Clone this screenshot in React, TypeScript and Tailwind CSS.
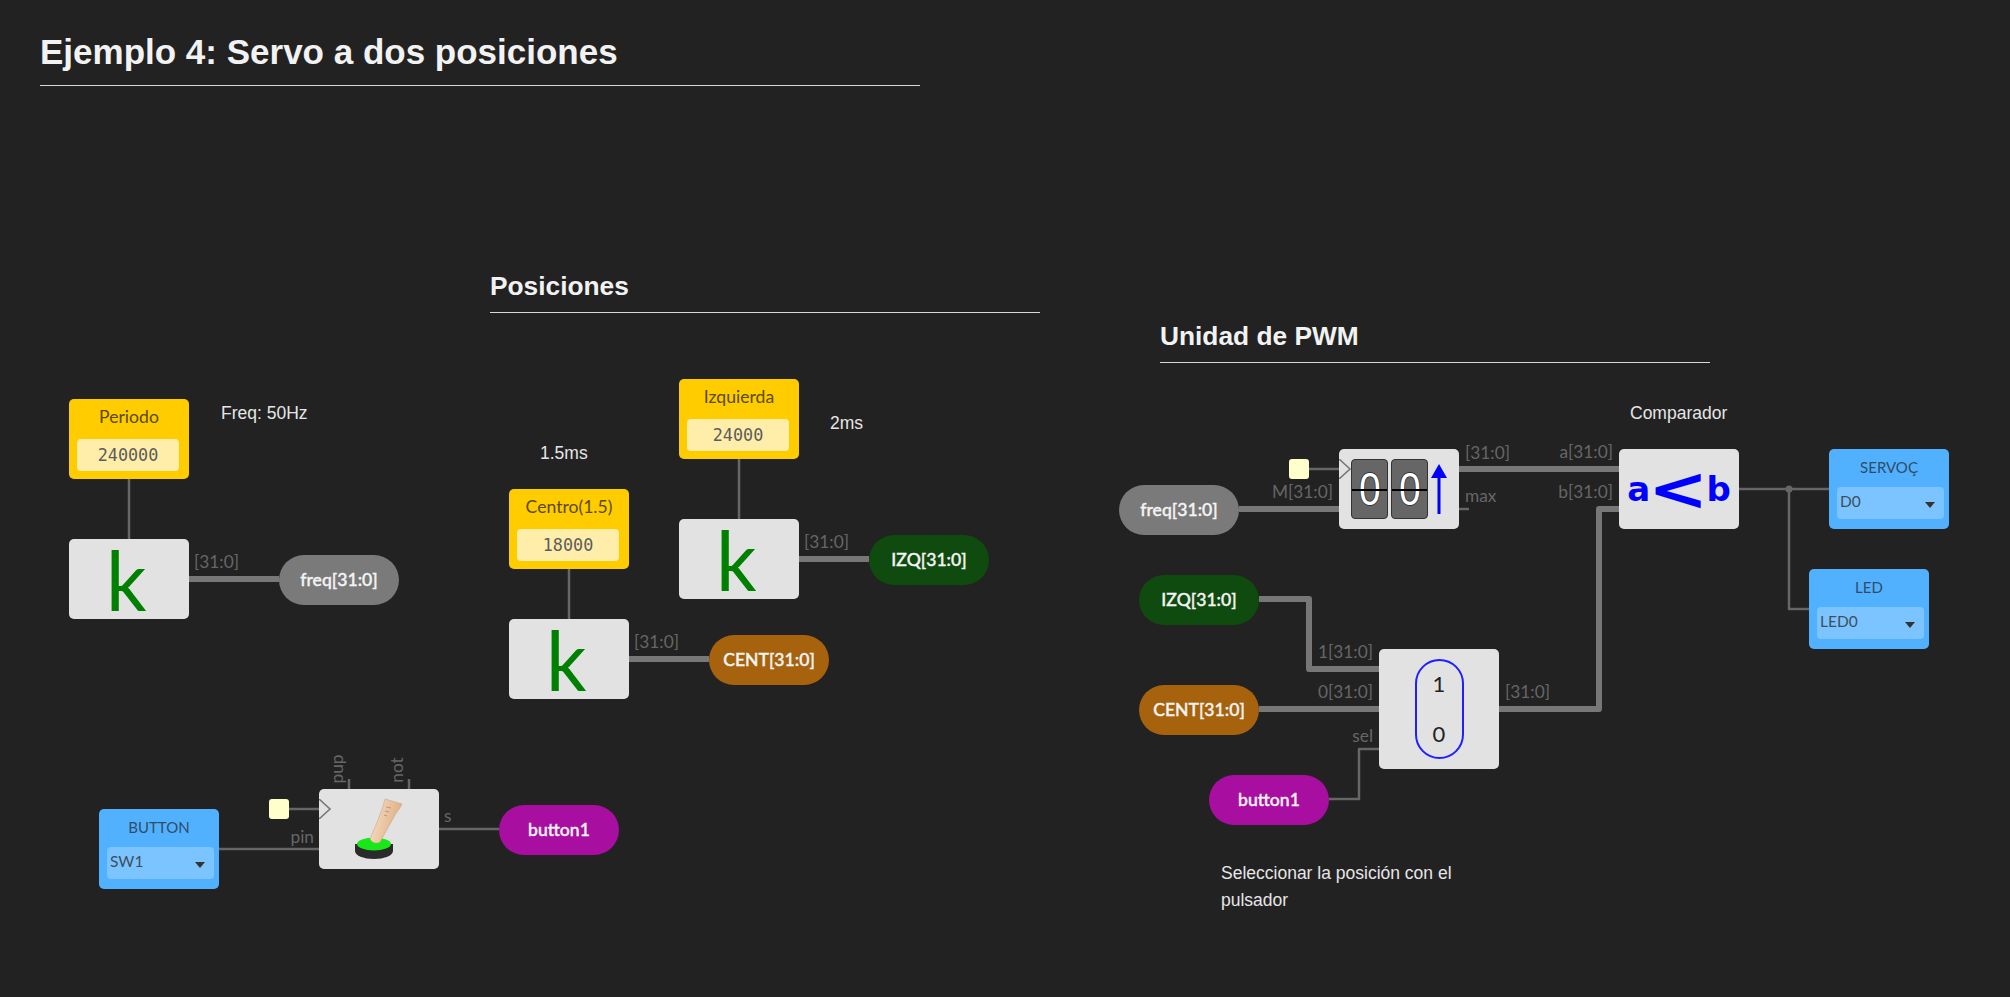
const lato = "font-['Lato','Noto_Sans',sans-serif]";

type WireProps = { d: string; thick?: boolean };

const wires: WireProps[] = [
  { d: "M129 479V539" },
  { d: "M189 579H279", thick: true },
  { d: "M739 459V519" },
  { d: "M799 559H869", thick: true },
  { d: "M569 569V619" },
  { d: "M629 659H709", thick: true },
  { d: "M219 849H319" },
  { d: "M289 809H319" },
  { d: "M439 829H499" },
  { d: "M349 779V789" },
  { d: "M409 779V789" },
  { d: "M1309 469H1339" },
  { d: "M1239 509H1339", thick: true },
  { d: "M1459 469H1619", thick: true },
  { d: "M1459 509H1469" },
  { d: "M1259 599H1309V669H1379", thick: true },
  { d: "M1259 709H1379", thick: true },
  { d: "M1329 799H1359V749H1379" },
  { d: "M1499 709H1599V509H1619", thick: true },
  { d: "M1739 489H1829" },
  { d: "M1789 489V609H1809" },
];

const Heading = ({ text, className }: { text: string; className: string }) => (
  <div className={`absolute w-[550px] h-[53px] border-b-[1.5px] border-[#d8d8d8] text-[26.3px] leading-[52px] font-bold text-[#f2f2f2] ${className}`}>
    {text}
  </div>
);

const Note = ({ text, className }: { text: string; className: string }) => (
  <p className={`absolute text-[17.5px] leading-[27px] text-[#e6e6e6] ${className}`}>{text}</p>
);

const Label = ({ text, className }: { text: string; className: string }) => (
  <span className={`absolute ${lato} text-[17.3px] leading-5 text-[#666666] whitespace-nowrap ${className}`}>{text}</span>
);

const Pill = ({ text, className }: { text: string; className: string }) => (
  <div className={`absolute w-[120px] h-[50px] rounded-[25px] flex items-center justify-center ${lato} text-[17.6px] font-medium [-webkit-text-stroke:0.4px_#f4f4f4] text-[#f4f4f4] ${className}`}>
    {text}
  </div>
);

const Constant = ({ name, value, className }: { name: string; value: string; className: string }) => (
  <div className={`absolute w-[120px] h-[80px] rounded-[5px] bg-[#ffcc00] ${className}`}>
    <div className={`h-[40px] pt-[7px] text-center ${lato} text-[17.6px] leading-[22px] text-[#5a4a00]`}>{name}</div>
    <div className="ml-2 mr-[10px] h-[32px] rounded-[4px] bg-[#ffeeaa] text-center font-['DejaVu_Sans_Mono',monospace] text-[16.8px] leading-[33px] text-[#5c5c5c]">
      {value}
    </div>
  </div>
);

const PinSelect = ({ name, value, className }: { name: string; value: string; className: string }) => (
  <div className={`absolute w-[120px] h-[80px] rounded-[5px] bg-[#51b1ff] ${className}`}>
    <div className={`h-[38px] pt-[7px] text-center ${lato} text-[15px] leading-[22px] text-[#2f4d68]`}>{name}</div>
    <div className="relative ml-2 mr-[5px] h-[32px] rounded-[4px] bg-[#7cc4ff]">
      <span className={`absolute left-[3px] top-[4px] ${lato} text-[15.5px] leading-5 text-[#3d4f5e]`}>{value}</span>
      <span className="absolute left-[88px] top-[15px] w-0 h-0 border-x-[5px] border-x-transparent border-t-[6px] border-t-[#333333]" />
    </div>
  </div>
);

const Module = ({ className, children }: { className: string; children?: React.ReactNode }) => (
  <div className={`absolute w-[120px] h-[80px] rounded-[5px] bg-[#e2e2e2] ${className}`}>
    {children}
  </div>
);

const KBlock = ({ className }: { className: string }) => (
  <Module className={className}>
    <div className="flex h-[80px] items-center justify-center pr-[5px]">
      <span className="font-['Lato',sans-serif] text-[84px] leading-[80px] scale-x-95 text-[#008000]">k</span>
    </div>
  </Module>
);

const ClockPin = ({ className }: { className: string }) => (
  <div className={`absolute w-5 h-5 rounded-[3px] bg-[#ffffcc] ${className}`} />
);

const ClockMark = () => (
  <svg className="absolute left-0 top-[10px]" width="14" height="20" viewBox="0 0 14 20">
    <path d="M0 0L11 10L0 20" fill="none" stroke="#777777" strokeWidth="1.6" />
  </svg>
);

const FlipDigit = () => (
  <div className="relative w-[37px] h-[60px] rounded-[4px] bg-[#666666] border border-[#333333] flex items-center justify-center">
    <span className="font-['Liberation_Sans',sans-serif] text-[46px] leading-none scale-x-[0.85] text-white [-webkit-text-stroke:1.5px_#222222] [paint-order:stroke_fill]">0</span>
    <span className="absolute inset-x-0 top-[29px] h-[2px] bg-black" />
  </div>
);

const PressIcon = () => (
  <svg className="absolute left-[30px] top-[4px]" width="60" height="72" viewBox="0 0 60 72">
    <defs>
      <linearGradient id="finger" x1="0" y1="0" x2="1" y2="0.3">
        <stop offset="0" stopColor="#f9e4cc" />
        <stop offset="1" stopColor="#dfae82" />
      </linearGradient>
    </defs>
    <ellipse cx="25" cy="58" rx="19" ry="8" fill="#2b2b2b" />
    <rect x="6" y="51" width="38" height="7" fill="#2b2b2b" />
    <ellipse cx="25" cy="51" rx="17" ry="6.5" fill="#18e818" />
    <path d="M36 6L53 11C51 16 47 19 45 24L31 49C28 51 23 50 21 46C25 36 32 22 36 6Z" fill="url(#finger)" stroke="#c9a68a" strokeWidth="0.6" />
    <path d="M37 14L42 15M36 18L40 19M35 22L38 23" stroke="#b08a70" strokeWidth="0.8" />
  </svg>
);

const App = () => {
  return (
    <div className="relative w-full h-screen overflow-hidden bg-[#222222] font-['Liberation_Sans',Arial,sans-serif]">
      <div className="ml-10 w-[880px] h-[86px] pt-[31px] border-b-[1.5px] border-[#d8d8d8]">
        <h1 className="text-[35px] leading-[42px] font-bold text-[#f2f2f2]">Ejemplo 4: Servo a dos posiciones</h1>
      </div>

      <svg className="absolute inset-0" width="2010" height="997" fill="none">
        {wires.map((wire) => (
          <path
            key={wire.d}
            d={wire.d}
            stroke={wire.thick ? "#777777" : "#666666"}
            strokeWidth={wire.thick ? 6 : 2.5}
            strokeLinejoin="round"
          />
        ))}
        <circle cx="1789" cy="489" r="3.5" fill="#666666" />
      </svg>

      <Heading text="Posiciones" className="left-[490px] top-[260px]" />
      <Heading text="Unidad de PWM" className="left-[1160px] top-[310px]" />

      <Note text="Freq: 50Hz" className="left-[221px] top-[400px]" />
      <Note text="1.5ms" className="left-[540px] top-[440px]" />
      <Note text="2ms" className="left-[830px] top-[410px]" />
      <Note text="Comparador" className="left-[1630px] top-[400px]" />
      <Note text="Seleccionar la posición con el pulsador" className="left-[1221px] top-[860px] w-[260px]" />

      <Constant name="Periodo" value="240000" className="left-[69px] top-[399px]" />
      <KBlock className="left-[69px] top-[539px]" />
      <Label text="[31:0]" className="left-[194px] top-[552px]" />
      <Pill text="freq[31:0]" className="left-[279px] top-[555px] bg-[#7a7a7a]" />

      <Constant name="Izquierda" value="24000" className="left-[679px] top-[379px]" />
      <KBlock className="left-[679px] top-[519px]" />
      <Label text="[31:0]" className="left-[804px] top-[532px]" />
      <Pill text="IZQ[31:0]" className="left-[869px] top-[535px] bg-[#0f4a0f]" />

      <Constant name="Centro(1.5)" value="18000" className="left-[509px] top-[489px]" />
      <KBlock className="left-[509px] top-[619px]" />
      <Label text="[31:0]" className="left-[634px] top-[632px]" />
      <Pill text="CENT[31:0]" className="left-[709px] top-[635px] bg-[#a6620d]" />

      <PinSelect name="BUTTON" value="SW1" className="left-[99px] top-[809px]" />
      <ClockPin className="left-[269px] top-[799px]" />
      <Module className="left-[319px] top-[789px]">
        <ClockMark />
        <PressIcon />
      </Module>
      <Label text="pin" className="left-[314px] top-[827px] -translate-x-full" />
      <Label text="s" className="left-[444px] top-[806px]" />
      <Label text="pup" className="left-[337px] top-[769px] -translate-x-1/2 -translate-y-1/2 -rotate-90" />
      <Label text="not" className="left-[397px] top-[770px] -translate-x-1/2 -translate-y-1/2 -rotate-90" />
      <Pill text="button1" className="left-[499px] top-[805px] bg-[#a80ea0]" />

      <Pill text="freq[31:0]" className="left-[1119px] top-[485px] bg-[#7a7a7a]" />
      <ClockPin className="left-[1289px] top-[459px]" />
      <Module className="left-[1339px] top-[449px]">
        <div className="flex gap-[3px] pl-3 pt-[10px]">
          <FlipDigit />
          <FlipDigit />
        </div>
        <ClockMark />
        <svg className="absolute left-[92px] top-[15px]" width="16" height="52" viewBox="0 0 16 52">
          <path d="M8 0L16 14H9.5V50H6.5V14H0Z" fill="#0000ff" />
        </svg>
      </Module>
      <Label text="M[31:0]" className="left-[1333px] top-[482px] -translate-x-full" />
      <Label text="[31:0]" className="left-[1465px] top-[443px]" />
      <Label text="max" className="left-[1465px] top-[486px]" />

      <Module className="left-[1619px] top-[449px]">
        <div className="flex h-full items-center justify-center gap-[3px] font-['DejaVu_Sans',sans-serif] text-[#0000ff]">
          <span className="text-[34px] leading-none font-bold">a</span>
          <span className="text-[60px] leading-none font-bold scale-x-[1.2]">&lt;</span>
          <span className="text-[34px] leading-none font-bold">b</span>
        </div>
      </Module>
      <Label text="a[31:0]" className="left-[1613px] top-[442px] -translate-x-full" />
      <Label text="b[31:0]" className="left-[1613px] top-[482px] -translate-x-full" />

      <PinSelect name="SERVOÇ" value="D0" className="left-[1829px] top-[449px]" />
      <PinSelect name="LED" value="LED0" className="left-[1809px] top-[569px]" />

      <Pill text="IZQ[31:0]" className="left-[1139px] top-[575px] bg-[#0f4a0f]" />
      <Pill text="CENT[31:0]" className="left-[1139px] top-[685px] bg-[#a6620d]" />
      <Pill text="button1" className="left-[1209px] top-[775px] bg-[#a80ea0]" />

      <Module className="left-[1379px] top-[649px] h-[120px] flex items-center justify-center">
        <div className={`flex flex-col items-center justify-between w-[49px] h-[100px] py-2 rounded-[25px] border-2 border-[#2020ff] ${lato} text-[22px] leading-[30px] text-[#222222]`}>
          <span>1</span>
          <span>0</span>
        </div>
      </Module>
      <Label text="1[31:0]" className="left-[1373px] top-[642px] -translate-x-full" />
      <Label text="0[31:0]" className="left-[1373px] top-[682px] -translate-x-full" />
      <Label text="sel" className="left-[1373px] top-[726px] -translate-x-full" />
      <Label text="[31:0]" className="left-[1505px] top-[682px]" />
    </div>
  );
};

export default App;
